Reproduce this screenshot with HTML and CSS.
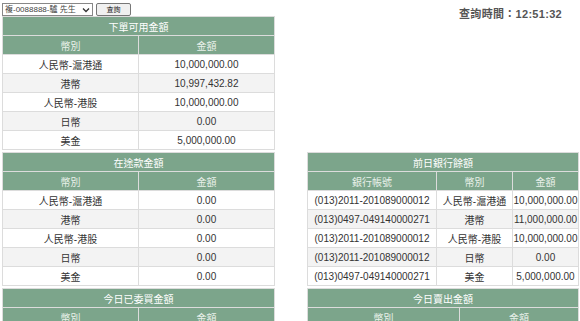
FILE: index.html
```html
<!DOCTYPE html>
<html>
<head>
<meta charset="utf-8">
<link rel="stylesheet" href="styles.css">
</head>
<body>
<div class="topbar">
  <div class="controls">
    <div class="acct"><span>複-0088888-驢 先生</span><svg class="arrow" width="8" height="6" viewBox="0 0 8 6"><path d="M1 1.5 L4 4.5 L7 1.5" fill="none" stroke="#333" stroke-width="1.3"/></svg></div>
    <button class="btn">查詢</button>
  </div>
  <div class="qtime">查詢時間：12:51:32</div>
</div>
<div class="grid">
  <table class="tbl left">
    <tr><th colspan="2" class="title">下單可用金額</th></tr>
    <tr><th>幣別</th><th>金額</th></tr>
    <tr><td>人民幣-滬港通</td><td>10,000,000.00</td></tr>
    <tr class="alt"><td>港幣</td><td>10,997,432.82</td></tr>
    <tr><td>人民幣-港股</td><td>10,000,000.00</td></tr>
    <tr class="alt"><td>日幣</td><td>0.00</td></tr>
    <tr><td>美金</td><td>5,000,000.00</td></tr>
  </table>
  <div></div>
  <table class="tbl left">
    <tr><th colspan="2" class="title">在途款金額</th></tr>
    <tr><th>幣別</th><th>金額</th></tr>
    <tr><td>人民幣-滬港通</td><td>0.00</td></tr>
    <tr class="alt"><td>港幣</td><td>0.00</td></tr>
    <tr><td>人民幣-港股</td><td>0.00</td></tr>
    <tr class="alt"><td>日幣</td><td>0.00</td></tr>
    <tr><td>美金</td><td>0.00</td></tr>
  </table>
  <table class="tbl right">
    <colgroup><col class="c1"><col class="c2"><col></colgroup>
    <tr><th colspan="3" class="title">前日銀行餘額</th></tr>
    <tr><th>銀行帳號</th><th>幣別</th><th>金額</th></tr>
    <tr><td>(013)2011-201089000012</td><td>人民幣-滬港通</td><td>10,000,000.00</td></tr>
    <tr class="alt"><td>(013)0497-049140000271</td><td>港幣</td><td>11,000,000.00</td></tr>
    <tr><td>(013)2011-201089000012</td><td>人民幣-港股</td><td>10,000,000.00</td></tr>
    <tr class="alt"><td>(013)2011-201089000012</td><td>日幣</td><td>0.00</td></tr>
    <tr><td>(013)0497-049140000271</td><td>美金</td><td>5,000,000.00</td></tr>
  </table>
  <table class="tbl left">
    <tr><th colspan="2" class="title">今日已委買金額</th></tr>
    <tr><th>幣別</th><th>金額</th></tr>
    <tr><td>人民幣-滬港通</td><td>0.00</td></tr>
  </table>
  <table class="tbl right">
    <colgroup><col class="c3"><col></colgroup>
    <tr><th colspan="2" class="title">今日賣出金額</th></tr>
    <tr><th>幣別</th><th>金額</th></tr>
    <tr><td>人民幣-滬港通</td><td>0.00</td></tr>
  </table>
</div>
</body>
</html>
```

FILE: styles.css
```css
html, body {
  margin: 0;
  padding: 0;
  background: #fff;
  overflow: hidden;
}
body {
  padding: 3px 0 0 2px;
  font-family: "Liberation Sans", "Noto Sans CJK TC", sans-serif;
  font-size: 10px;
  color: #333;
}
.topbar {
  display: flex;
  justify-content: space-between;
  align-items: flex-start;
  width: 560px;
  height: 13px;
}
.controls {
  display: flex;
  gap: 3px;
}
.acct {
  box-sizing: border-box;
  width: 91px;
  height: 13px;
  font-size: 8px;
  line-height: 11px;
  padding: 0 2px 0 2px;
  border: 1px solid #888;
  background: #fff;
  color: #444;
  display: flex;
  align-items: center;
  justify-content: space-between;
  white-space: nowrap;
  overflow: hidden;
}
.arrow {
  flex: none;
}
.btn {
  width: 35px;
  height: 13px;
  font-size: 7px;
  line-height: 11px;
  padding: 0;
  margin: 0;
  border: 1px solid #777;
  border-radius: 2px;
  background: #f0f0f0;
  color: #222;
  font-family: "Liberation Sans", "Noto Sans CJK TC", sans-serif;
}
.qtime {
  font-weight: bold;
  font-size: 11px;
  color: #555;
  margin-top: 2px;
  letter-spacing: 0.3px;
}
.grid {
  display: grid;
  grid-template-columns: 273px 272px;
  column-gap: 32px;
  row-gap: 2px;
}
.tbl {
  border-collapse: separate;
  border-spacing: 1px;
  background: #dcdcdc;
  width: 100%;
  table-layout: fixed;
}
.tbl th, .tbl td {
  height: 18px;
  padding: 0;
  text-align: center;
  font-weight: normal;
  white-space: nowrap;
  overflow: hidden;
}
.tbl th {
  background: #7ca58b;
  color: #e9f1ea;
}
.tbl th.title {
  color: #fff;
}
.tbl td {
  background: #fff;
  color: #333;
}
.tbl tr.alt td {
  background: #f3f3f3;
}
.right .c1 { width: 128px; }
.right .c2 { width: 75px; }
.right .c3 { width: 151px; }
```
